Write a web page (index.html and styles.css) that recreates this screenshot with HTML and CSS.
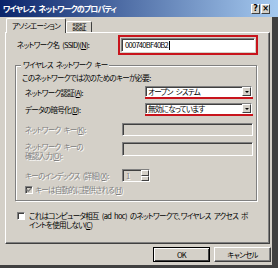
FILE: index.html
```html
<!DOCTYPE html>
<html lang="ja">
<head>
    <meta charset="UTF-8">
    <title>ワイヤレス ネットワークのプロパティ</title>
    <link rel="stylesheet" href="styles.css">
</head>
<body>
    <div class="window">
        <div class="titlebar">
            <span class="title">ワイヤレス ネットワークのプロパティ</span>
            <span class="caption-btns">
                <span class="cap-btn">?</span>
                <span class="cap-btn">×</span>
            </span>
        </div>
        <div class="client">
            <div class="tabs">
                <div class="tab active">アソシエーション</div>
                <div class="tab">認証</div>
            </div>
            <div class="panel">
                <div class="ssid-row">
                    <span class="lbl">ネットワーク名 (SSID)(<u>N</u>):</span>
                    <div class="hilite">
                        <div class="field">000740BF40B2<span class="caret"></span></div>
                    </div>
                </div>

                <div class="group">
                    <span class="legend">ワイヤレス ネットワーク キー</span>
                    <p class="note">このネットワークでは次のためのキーが必要:</p>

                    <div class="field-row auth-row">
                        <span class="lbl wide">ネットワーク認証(<u>A</u>):</span>
                        <div class="select-wrap">
                            <div class="select">オープン システム<span class="drop"></span></div>
                        </div>
                    </div>
                    <div class="field-row enc-row">
                        <span class="lbl wide">データの暗号化(<u>D</u>):</span>
                        <div class="select-wrap">
                            <div class="select">無効になっています<span class="drop"></span></div>
                        </div>
                    </div>

                    <div class="field-row key-row">
                        <span class="lbl disabled">ネットワーク キー(<u>K</u>):</span>
                        <div class="text-input"></div>
                    </div>
                    <div class="field-row confirm-row">
                        <span class="lbl disabled">ネットワーク キーの<br>確認入力(<u>O</u>):</span>
                        <div class="text-input tall"></div>
                    </div>
                    <div class="field-row index-row">
                        <span class="lbl disabled">キーのインデックス (詳細)(<u>X</u>):</span>
                        <div class="spin">
                            <div class="spin-field disabled">1</div>
                            <div class="spin-btns">
                                <span class="spin-btn"></span>
                                <span class="spin-btn"></span>
                            </div>
                        </div>
                    </div>
                    <div class="field-row auto-row">
                        <span class="cb grey">
                            <svg width="6" height="6" viewBox="0 0 6 6"><path d="M0.5 2.5 L2.3 4.3 L5.5 1" fill="none" stroke="#808080" stroke-width="1.3"/></svg>
                        </span>
                        <span class="disabled">キーは自動的に提供される(<u>H</u>)</span>
                    </div>
                </div>

                <div class="adhoc-row">
                    <span class="cb"></span>
                    <span class="adhoc-text">これはコンピュータ相互 (ad hoc) のネットワークで、ワイヤレス アクセス ポ<br>イントを使用しない(<u>C</u>)</span>
                </div>
            </div>
            <div class="buttons">
                <div class="btn default">OK</div>
                <div class="btn">キャンセル</div>
            </div>
        </div>
    </div>
</body>
</html>
```

FILE: styles.css
```css
* {
    box-sizing: border-box;
}
body {
    margin: 0;
    font-family: "Noto Sans CJK JP", "Noto Sans", sans-serif;
    font-size: 7.5px;
    line-height: 10px;
    letter-spacing: -0.7px;
    word-spacing: 2px;
    font-feature-settings: "palt";
    color: #000;
    background: #d4d0c8;
}
u {
    text-decoration-thickness: 1px;
}
.window {
    width: 278px;
    height: 268px;
    display: flex;
    flex-direction: column;
    background: #d4d0c8;
    overflow: hidden;
}
.titlebar {
    height: 17px;
    flex: none;
    display: flex;
    align-items: center;
    justify-content: space-between;
    padding: 0 8px 0 3px;
    background: linear-gradient(to right, #0a246a, #a6caf0);
}
.title {
    color: #fff;
    font-weight: bold;
    font-size: 8px;
    letter-spacing: -0.9px;
}
.caption-btns {
    display: flex;
    gap: 1px;
}
.cap-btn {
    width: 9px;
    height: 10px;
    background: #d4d0c8;
    border-top: 1px solid #fff;
    border-left: 1px solid #fff;
    border-right: 1px solid #404040;
    border-bottom: 1px solid #404040;
    font-size: 8px;
    line-height: 8px;
    letter-spacing: 0;
    font-weight: bold;
    text-align: center;
    font-family: "DejaVu Sans", sans-serif;
}
.client {
    flex: 1;
    display: flex;
    flex-direction: column;
    border-right: 6px solid #404040;
    border-bottom: 3px solid #404040;
}
.tabs {
    display: flex;
    align-items: flex-end;
    height: 15px;
    padding: 1px 0 0 6px;
}
.tab {
    height: 11px;
    padding: 0 5px;
    line-height: 10px;
    border-top: 1px solid #fff;
    border-left: 1px solid #fff;
    border-right: 1px solid #404040;
    border-radius: 2px 2px 0 0;
}
.tab.active {
    height: 15px;
    padding: 0 5px;
    line-height: 13px;
    margin-bottom: -1px;
    position: relative;
    z-index: 1;
    background: #d4d0c8;
}
.panel {
    margin-left: 5px;
    width: 265px;
    height: 212px;
    border-top: 1px solid #fff;
    border-left: 1px solid #fff;
    border-right: 1px solid #404040;
    border-bottom: 1px solid #404040;
    box-shadow: inset -1px -1px 0 #808080;
}
.ssid-row {
    display: flex;
    align-items: center;
    margin-top: 2px;
    padding-left: 11px;
}
.ssid-row .lbl {
    width: 101px;
}
.hilite {
    width: 140px;
    height: 20px;
    border: 2px solid #c8141c;
    padding: 1px;
    display: flex;
}
.field {
    flex: 1;
    display: flex;
    align-items: center;
    padding-left: 3px;
    background: #fff;
    border-top: 1px solid #808080;
    border-left: 1px solid #808080;
    border-bottom: 1px solid #fff;
    border-right: 1px solid #fff;
    box-shadow: inset 1px 1px 0 #404040;
}
.caret {
    width: 1px;
    height: 9px;
    margin-left: 1px;
    background: #000;
}
.group {
    position: relative;
    margin: 10px 0 0 9px;
    width: 242px;
    height: 136px;
    padding: 7px 3px 0 6px;
    border: 1px solid #808080;
    box-shadow: inset 1px 1px 0 #fff, 1px 1px 0 #fff;
}
.legend {
    position: absolute;
    top: -6px;
    left: 5px;
    padding: 0 2px;
    background: #d4d0c8;
}
.note {
    margin: 0;
}
.field-row {
    display: flex;
    align-items: center;
    margin-left: 3px;
}
.field-row .lbl {
    width: 97px;
}
.field-row .lbl.wide {
    width: 120px;
}
.auth-row {
    margin-top: 3px;
}
.enc-row {
    margin-top: 4px;
}
.select-wrap {
    width: 108px;
    border-bottom: 2px solid #c8141c;
}
.select {
    height: 11px;
    width: 107px;
    display: flex;
    align-items: center;
    justify-content: space-between;
    padding-left: 2px;
    background: #fff;
    border-top: 1px solid #808080;
    border-left: 1px solid #808080;
    border-bottom: 1px solid #fff;
    border-right: 1px solid #fff;
    box-shadow: inset 1px 1px 0 #404040;
    line-height: 9px;
}
.drop {
    width: 9px;
    height: 9px;
    background: #d4d0c8;
    border-top: 1px solid #fff;
    border-left: 1px solid #fff;
    border-right: 1px solid #404040;
    border-bottom: 1px solid #404040;
    display: flex;
    align-items: center;
    justify-content: center;
}
.drop::after {
    content: "";
    border-left: 2px solid transparent;
    border-right: 2px solid transparent;
    border-top: 2px solid #000;
}
.disabled {
    color: #808080;
    text-shadow: 1px 1px 0 #fff;
}
.text-input {
    width: 131px;
    height: 13px;
    background: #d4d0c8;
    border-top: 1px solid #808080;
    border-left: 1px solid #808080;
    border-bottom: 1px solid #fff;
    border-right: 1px solid #fff;
    box-shadow: inset 1px 1px 0 #404040;
}
.text-input.tall {
    height: 14px;
}
.key-row {
    margin-top: 7px;
}
.confirm-row {
    margin-top: 6px;
    align-items: flex-start;
    line-height: 9px;
}
.index-row {
    margin-top: 9px;
}
.spin {
    display: flex;
    width: 28px;
    height: 13px;
    border-top: 1px solid #808080;
    border-left: 1px solid #808080;
    border-bottom: 1px solid #fff;
    border-right: 1px solid #fff;
    box-shadow: inset 1px 1px 0 #404040;
}
.spin-field {
    flex: 1;
    padding-left: 3px;
    line-height: 11px;
}
.spin-btns {
    width: 8px;
    display: flex;
    flex-direction: column;
}
.spin-btn {
    flex: 1;
    background: #d4d0c8;
    border-top: 1px solid #fff;
    border-left: 1px solid #fff;
    border-right: 1px solid #404040;
    border-bottom: 1px solid #404040;
}
.auto-row {
    margin-top: 3px;
    gap: 2px;
}
.cb {
    width: 8px;
    height: 8px;
    flex: none;
    display: flex;
    align-items: center;
    justify-content: center;
    background: #fff;
    border-top: 1px solid #808080;
    border-left: 1px solid #808080;
    border-bottom: 1px solid #fff;
    border-right: 1px solid #fff;
    box-shadow: inset 1px 1px 0 #404040;
}
.cb.grey {
    background: #d4d0c8;
}
.adhoc-row {
    display: flex;
    align-items: flex-start;
    gap: 4px;
    margin: 10px 0 0 11px;
    line-height: 9px;
}
.adhoc-text {
    white-space: nowrap;
}
.adhoc-row .cb {
    margin-top: 1px;
}
.buttons {
    display: flex;
    justify-content: flex-end;
    gap: 4px;
    margin-top: 3px;
    padding-right: 1px;
}
.btn {
    width: 57px;
    height: 15px;
    display: flex;
    align-items: center;
    justify-content: center;
    border-top: 1px solid #fff;
    border-left: 1px solid #fff;
    border-right: 1px solid #404040;
    border-bottom: 1px solid #404040;
    box-shadow: inset -1px -1px 0 #808080;
}
.btn.default {
    border: 1px solid #000;
    box-shadow: inset 1px 1px 0 #fff, inset -1px -1px 0 #404040;
}
```
